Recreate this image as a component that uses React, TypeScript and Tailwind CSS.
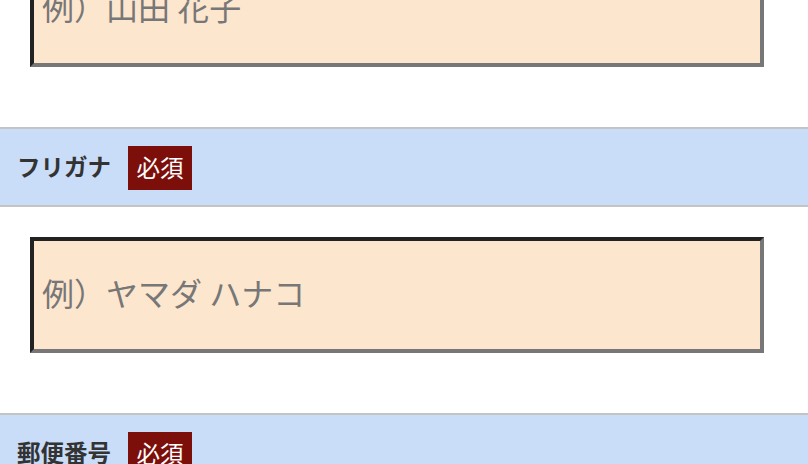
const font = {
  fontFamily: '"Noto Sans CJK JP", "Noto Sans", sans-serif',
};

function FieldHeader({ label }: { label: string }) {
  return (
    <div className="flex h-[80px] items-center gap-[17px] border-y-2 border-[#c4c4c4] bg-[#c9dcf8] pl-[17px]">
      <span className="text-[23.5px] font-bold text-[#333333]">{label}</span>
      <span className="mt-[2px] flex h-[44px] w-[64px] items-center justify-center bg-[#7d0f0a] text-[23.5px] text-white">
        必須
      </span>
    </div>
  );
}

function FieldInput({ placeholder }: { placeholder: string }) {
  return (
    <div className="pb-[60px] pl-[30px] pt-[30px]">
      <input
        type="text"
        placeholder={placeholder}
        className="h-[116px] w-[734px] border-4 border-solid border-b-[#777777] border-l-[#222222] border-r-[#777777] border-t-[#222222] bg-[#fde6ce] px-[8px] pb-[6px] text-[32px] text-[#333333] outline-none placeholder:text-[#777777]"
        style={font}
      />
    </div>
  );
}

export default function App() {
  return (
    <div className="h-[464px] w-[808px] overflow-hidden bg-white" style={font}>
      <div className="-mt-[159px]">
        <FieldHeader label="お名前" />
        <FieldInput placeholder="例）山田 花子" />
        <FieldHeader label="フリガナ" />
        <FieldInput placeholder="例）ヤマダ ハナコ" />
        <FieldHeader label="郵便番号" />
        <FieldInput placeholder="例）123-4567" />
      </div>
    </div>
  );
}
